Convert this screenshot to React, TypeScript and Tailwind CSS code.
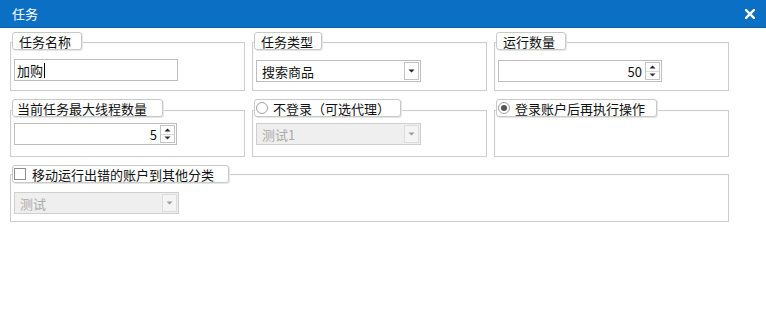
import React from "react";

const font = "font-['Noto_Sans_CJK_SC','Microsoft_YaHei',sans-serif]";

function Label({ children, className = "" }: { children: React.ReactNode; className?: string }) {
  return (
    <div
      className={`absolute top-0 left-[2px] h-[18px] flex items-center bg-white border border-[#c9c9c9] rounded-[3px] shadow-[1px_1px_0_#e6e6e6] text-[13px] leading-none text-[#111] ${className}`}
    >
      {children}
    </div>
  );
}

function Group({
  label,
  boxH,
  children,
  w = "w-[235px]",
  padTop,
  top = "pt-[10px]",
}: {
  label: React.ReactNode;
  boxH: string;
  children?: React.ReactNode;
  w?: string;
  padTop: string;
  top?: string;
}) {
  return (
    <div className={`relative ${top} ${w}`}>
      <div className={`${boxH} border border-[#cdcdcd] shadow-[inset_1px_1px_0_#fafafa] pl-[3px] ${padTop}`}>
        {children}
      </div>
      {label}
    </div>
  );
}

function DownTri({ color = "#333" }: { color?: string }) {
  return (
    <svg width="7" height="4" viewBox="0 0 7 4">
      <path d="M0.5 0.5 L6.5 0.5 L3.5 3.5 Z" fill={color} />
    </svg>
  );
}

function Combo({ text, disabled = false }: { text: string; disabled?: boolean }) {
  return (
    <div
      className={`w-[165px] h-[22px] flex items-center border ${
        disabled ? "border-[#cfcfcf] bg-[#efefef] text-[#ababab]" : "border-[#bdbdbd] bg-white text-[#111]"
      }`}
    >
      <span className="flex-1 pl-[5px] text-[13px] leading-none">{text}</span>
      <div
        className={`w-[15px] h-[18px] mr-[1px] flex items-center justify-center border ${
          disabled ? "border-[#dcdcdc] bg-[#f4f4f4]" : "border-[#c4c4c4] bg-white"
        }`}
      >
        <DownTri color={disabled ? "#9a9a9a" : "#222"} />
      </div>
    </div>
  );
}

function Spinner({ value, w = "w-[164px]" }: { value: string; w?: string }) {
  return (
    <div className={`${w} h-[22px] flex items-center border border-[#bdbdbd] bg-white`}>
      <span className="flex-1 text-right pr-[3px] text-[13px] leading-none text-[#111]">{value}</span>
      <div className="w-[15px] h-[18px] mr-[1px] flex flex-col border border-[#c4c4c4]">
        <div className="flex-1 flex items-center justify-center border-b border-[#d8d8d8]">
          <svg width="7" height="4" viewBox="0 0 7 4">
            <path d="M0.5 3.5 L6.5 3.5 L3.5 0.5 Z" fill="#222" />
          </svg>
        </div>
        <div className="flex-1 flex items-center justify-center">
          <DownTri />
        </div>
      </div>
    </div>
  );
}

function Radio({ checked }: { checked: boolean }) {
  return (
    <div className="w-[12px] h-[12px] rounded-full border border-[#a0a0a0] bg-white flex items-center justify-center">
      {checked && <div className="w-[6px] h-[6px] rounded-full bg-[#555]" />}
    </div>
  );
}

export default function App() {
  return (
    <div className={`w-[766px] h-[318px] bg-white ${font}`}>
      <div className="h-[28px] bg-[#0b6fc4] border-b border-[#0a62ae] flex items-center justify-between pl-[12px] pr-[11px] text-white">
        <span className="text-[13px] leading-none">任务</span>
        <svg width="10" height="10" viewBox="0 0 10 10">
          <path d="M1 1 L9 9 M9 1 L1 9" stroke="white" strokeWidth="2.4" strokeLinecap="square" />
        </svg>
      </div>

      <div className="pl-[10px] pt-[4px] flex flex-col">
        {/* Row 1 */}
        <div className="flex gap-[7px]">
          <Group boxH="h-[49px]" padTop="pt-[16px]" label={<Label className="w-[70px] pl-[6px]">任务名称</Label>}>
            <div className="w-[164px] h-[22px] flex items-center border border-[#bdbdbd] bg-white pl-[2px] text-[13px] leading-none text-[#111]">
              加购<span className="ml-[1px] w-[1px] h-[15px] bg-black" />
            </div>
          </Group>
          <Group boxH="h-[49px]" padTop="pt-[17px]" label={<Label className="w-[68px] pl-[6px]">任务类型</Label>}>
            <Combo text="搜索商品" />
          </Group>
          <Group boxH="h-[49px]" padTop="pt-[17px]" label={<Label className="w-[70px] pl-[6px]">运行数量</Label>}>
            <Spinner value="50" />
          </Group>
        </div>

        {/* Row 2 */}
        <div className="flex gap-[7px] mt-[8px]">
          <Group
            top="pt-[11px]"
            boxH="h-[47px]"
            padTop="pt-[12px]"
            label={<Label className="w-[151px] pl-[4px]">当前任务最大线程数量</Label>}
          >
            <Spinner value="5" w="w-[163px]" />
          </Group>
          <Group
            top="pt-[11px]"
            boxH="h-[47px]"
            padTop="pt-[12px]"
            label={
              <Label className="w-[147px] pl-[1px] gap-[5px]">
                <Radio checked={false} />
                <span>不登录（可选代理）</span>
              </Label>
            }
          >
            <Combo text="测试1" disabled />
          </Group>
          <Group
            top="pt-[11px]"
            boxH="h-[47px]"
            padTop="pt-[12px]"
            label={
              <Label className="w-[161px] pl-[1px] gap-[5px]">
                <Radio checked />
                <span>登录账户后再执行操作</span>
              </Label>
            }
          />
        </div>

        {/* Row 3 */}
        <div className="mt-[8px]">
          <Group
            w="w-[719px]"
            top="pt-[9px]"
            boxH="h-[48px]"
            padTop="pt-[17px]"
            label={
              <Label className="w-[217px] left-[0px] pl-[1px] gap-[6px]">
                <div className="w-[12px] h-[12px] border border-[#8f8f8f] bg-white" />
                <span>移动运行出错的账户到其他分类</span>
              </Label>
            }
          >
            <Combo text="测试" disabled />
          </Group>
        </div>
      </div>
    </div>
  );
}
